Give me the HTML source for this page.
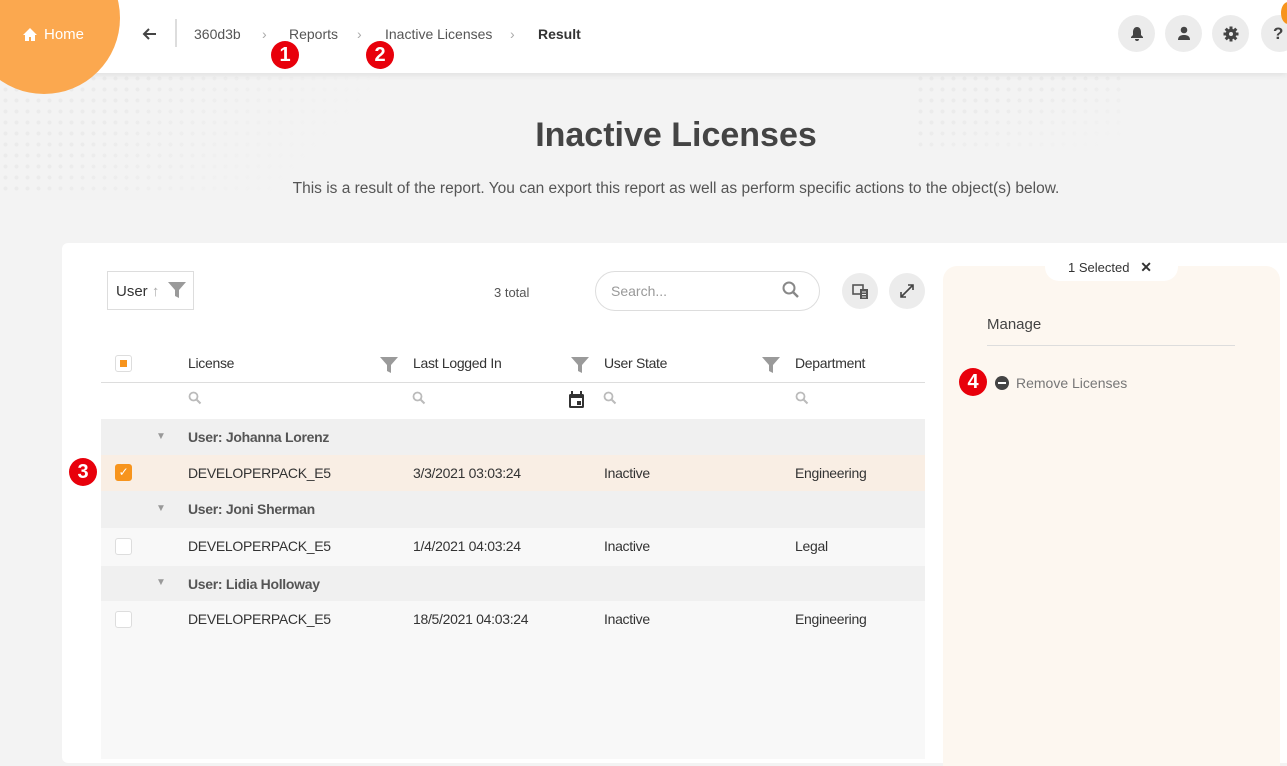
<!DOCTYPE html>
<html><head><meta charset="utf-8"><style>
*{box-sizing:border-box;margin:0;padding:0}
body{width:1287px;height:753px;overflow:hidden;background:#f3f3f3;font-family:"Liberation Sans",sans-serif;color:#333;position:relative}
.dots{position:absolute;background-image:radial-gradient(#e6e6e6 1.8px,transparent 2.2px);background-size:11px 11px}
.hdr{position:absolute;left:0;top:0;width:1287px;height:73px;background:#fff;box-shadow:0 2px 6px rgba(0,0,0,.08);z-index:2}
.home{position:absolute;left:-32px;top:-58px;width:152px;height:152px;border-radius:50%;background:#fba84f;z-index:3}
.hometxt{position:absolute;left:22px;top:26px;color:#fff;font-size:15px;z-index:4;display:flex;align-items:center;gap:6px}
.bc{position:absolute;top:26px;font-size:14px;color:#555;z-index:4}
.sep{position:absolute;top:26px;color:#aaa;font-size:14px;z-index:4}
.badge{position:absolute;width:28px;height:28px;border-radius:50%;background:#e8000b;color:#fff;font-weight:bold;font-size:20px;text-align:center;line-height:28px;z-index:5}
.ib{position:absolute;top:15px;width:37px;height:37px;border-radius:50%;background:#ececec;z-index:4;display:flex;align-items:center;justify-content:center}
.card{position:absolute;left:62px;top:243px;width:1240px;height:520px;background:#fff;border-radius:6px}
.abs{position:absolute}
.row{position:absolute;left:101px;width:824px;font-size:14px;letter-spacing:-0.3px;color:#333}
.row span{position:absolute;top:10px}
.cb{position:absolute;left:14px;width:17px;height:17px;border:1px solid #ddd;border-radius:3px;background:#fff}
</style></head><body>
<div class="dots" style="left:0;top:73px;width:380px;height:120px;opacity:.6;-webkit-mask-image:linear-gradient(135deg,#000 30%,transparent 80%)"></div>
<div class="dots" style="left:915px;top:73px;width:210px;height:80px;opacity:.6;-webkit-mask-image:linear-gradient(160deg,#000 40%,transparent 90%)"></div>
<div class="hdr"></div>
<div class="home"></div>
<div class="hometxt"><svg width="16" height="15" viewBox="0 0 16 15"><path d="M8 1L1 8h2v6h4v-4h2v4h4V8h2z" fill="#fff"/></svg>Home</div>
<svg class="abs" style="left:141px;top:27px;z-index:4" width="16" height="14" viewBox="0 0 16 14"><path d="M15 7H3M8 2L3 7l5 5" stroke="#444" stroke-width="2" fill="none"/></svg>
<div class="abs" style="left:175px;top:19px;width:2px;height:28px;background:#ddd;z-index:4"></div>
<div class="bc" style="left:194px">360d3b</div>
<div class="sep" style="left:262px">›</div>
<div class="bc" style="left:289px">Reports</div>
<div class="sep" style="left:357px">›</div>
<div class="bc" style="left:385px">Inactive Licenses</div>
<div class="sep" style="left:510px">›</div>
<div class="bc" style="left:538px;font-weight:bold;color:#333">Result</div>
<div class="badge" style="left:271px;top:41px">1</div>
<div class="badge" style="left:366px;top:41px">2</div>
<div class="ib" style="left:1118px"><svg width="14" height="15" viewBox="0 0 14 15"><path d="M7 1C4 1 3 4 3 6v3l-2 2v1h12v-1l-2-2V6c0-2-1-5-4-5zM5 13h4a2 2 0 01-4 0z" fill="#444"/></svg></div>
<div class="ib" style="left:1165px"><svg width="14" height="15" viewBox="0 0 14 15"><circle cx="7" cy="4" r="3.3" fill="#444"/><path d="M1 14c0-4 3-5 6-5s6 1 6 5z" fill="#444"/></svg></div>
<div class="ib" style="left:1212px"><svg width="16" height="16" viewBox="0 0 16 16"><g fill="#444"><rect x="6.5" y="0.5" width="3" height="15"/><rect x="0.5" y="6.5" width="15" height="3"/><rect x="6.5" y="0.5" width="3" height="15" transform="rotate(45 8 8)"/><rect x="6.5" y="0.5" width="3" height="15" transform="rotate(-45 8 8)"/><circle cx="8" cy="8" r="5.3"/></g><circle cx="8" cy="8" r="2" fill="#ececec"/></svg></div>
<div class="ib" style="left:1261px;font-weight:bold;font-size:17px;color:#444;justify-content:flex-start;padding-left:12px">?</div>
<div class="abs" style="left:1281px;top:2px;width:14px;height:22px;border-radius:50%;background:#f7941d;z-index:5"></div>

<div class="abs" style="left:0;width:1352px;top:116px;text-align:center;font-size:34px;font-weight:bold;color:#444">Inactive Licenses</div>
<div class="abs" style="left:0;width:1352px;top:180px;text-align:center;font-size:15.5px;color:#555">This is a result of the report. You can export this report as well as perform specific actions to the object(s) below.</div>

<div class="card"></div>
<div class="abs" style="left:107px;top:271px;width:87px;height:39px;border:1px solid #ddd;font-size:15px;padding:11px 0 0 8px">User <span style="color:#aaa">↑</span></div>
<svg class="abs" style="left:168px;top:282px" width="18" height="16" viewBox="0 0 18 16"><path d="M0 0h18l-7 8v8l-4-2V8z" fill="#9a9a9a"/></svg>
<div class="abs" style="left:494px;top:285px;font-size:13px;color:#555">3 total</div>
<div class="abs" style="left:595px;top:271px;width:225px;height:40px;border:1px solid #ddd;border-radius:20px;font-size:14px;color:#999;padding:11px 0 0 15px">Search...</div>
<svg class="abs" style="left:782px;top:281px" width="18" height="18" viewBox="0 0 18 18"><circle cx="7" cy="7" r="5.5" stroke="#888" stroke-width="2" fill="none"/><path d="M11 11l5 5" stroke="#888" stroke-width="2.4"/></svg>
<div class="abs" style="left:842px;top:273px;width:36px;height:36px;border-radius:50%;background:#ececec"></div>
<svg class="abs" style="left:852px;top:284px" width="17" height="15" viewBox="0 0 17 15"><rect x="1" y="1" width="10" height="9" stroke="#555" stroke-width="1.6" fill="none"/><rect x="8" y="5" width="8" height="10" fill="#555"/><path d="M10 8h4M10 10.5h4M10 13h4" stroke="#ececec"/></svg>
<div class="abs" style="left:889px;top:273px;width:36px;height:36px;border-radius:50%;background:#ececec"></div>
<svg class="abs" style="left:899px;top:283px" width="16" height="16" viewBox="0 0 16 16"><path d="M2 14L14 2M9 2h5v5M2 9v5h5" stroke="#444" stroke-width="1.6" fill="none"/></svg>

<div class="abs" style="left:101px;top:419px;width:824px;height:340px;background:#f8f8f8"></div>
<div class="row" style="top:345px;height:38px;border-bottom:1px solid #ddd">
<div class="cb" style="top:10px"><div style="position:absolute;left:4px;top:4px;width:7px;height:7px;background:#f7941d"></div></div>
<span style="left:87px">License</span><span style="left:312px">Last Logged In</span><span style="left:503px">User State</span><span style="left:694px">Department</span>
</div>
<svg class="abs" style="left:380px;top:357px" width="18" height="16" viewBox="0 0 18 16"><path d="M0 0h18l-7 8v8l-4-2V8z" fill="#9a9a9a"/></svg>
<svg class="abs" style="left:571px;top:357px" width="18" height="16" viewBox="0 0 18 16"><path d="M0 0h18l-7 8v8l-4-2V8z" fill="#9a9a9a"/></svg>
<svg class="abs" style="left:762px;top:357px" width="18" height="16" viewBox="0 0 18 16"><path d="M0 0h18l-7 8v8l-4-2V8z" fill="#9a9a9a"/></svg>
<div class="row" style="top:383px;height:36px;background:#fff"></div>
<svg class="abs" style="left:188px;top:391px" width="14" height="14" viewBox="0 0 14 14"><circle cx="5.5" cy="5.5" r="4" stroke="#bbb" stroke-width="1.8" fill="none"/><path d="M8.5 8.5l4 4" stroke="#bbb" stroke-width="2"/></svg>
<svg class="abs" style="left:412px;top:391px" width="14" height="14" viewBox="0 0 14 14"><circle cx="5.5" cy="5.5" r="4" stroke="#bbb" stroke-width="1.8" fill="none"/><path d="M8.5 8.5l4 4" stroke="#bbb" stroke-width="2"/></svg>
<svg class="abs" style="left:603px;top:391px" width="14" height="14" viewBox="0 0 14 14"><circle cx="5.5" cy="5.5" r="4" stroke="#bbb" stroke-width="1.8" fill="none"/><path d="M8.5 8.5l4 4" stroke="#bbb" stroke-width="2"/></svg>
<svg class="abs" style="left:795px;top:391px" width="14" height="14" viewBox="0 0 14 14"><circle cx="5.5" cy="5.5" r="4" stroke="#bbb" stroke-width="1.8" fill="none"/><path d="M8.5 8.5l4 4" stroke="#bbb" stroke-width="2"/></svg>
<svg class="abs" style="left:568px;top:391px" width="17" height="18" viewBox="0 0 17 18"><rect x="1" y="3" width="15" height="14" rx="1.5" fill="#333"/><rect x="3" y="7" width="11" height="8" fill="#fff"/><rect x="9" y="10" width="4" height="4" fill="#333"/><path d="M4 0v4M13 0v4" stroke="#333" stroke-width="2"/></svg>

<div class="row" style="top:419px;height:36px;background:#f0f0f0;font-weight:bold;color:#555"><span style="left:55px;font-size:10px;top:12px;color:#999">▼</span><span style="left:87px">User: Johanna Lorenz</span></div>
<div class="row" style="top:455px;height:36px;background:#f9eee4"><div class="cb" style="top:9px;background:#f7941d;border-color:#f7941d;color:#fff;font-size:12px;text-align:center;line-height:15px">✓</div><span style="left:87px">DEVELOPERPACK_E5</span><span style="left:312px">3/3/2021 03:03:24</span><span style="left:503px">Inactive</span><span style="left:694px">Engineering</span></div>
<div class="row" style="top:491px;height:37px;background:#f0f0f0;font-weight:bold;color:#555"><span style="left:55px;font-size:10px;top:12px;color:#999">▼</span><span style="left:87px">User: Joni Sherman</span></div>
<div class="row" style="top:528px;height:38px;background:#f8f8f8"><div class="cb" style="top:10px"></div><span style="left:87px">DEVELOPERPACK_E5</span><span style="left:312px">1/4/2021 04:03:24</span><span style="left:503px">Inactive</span><span style="left:694px">Legal</span></div>
<div class="row" style="top:566px;height:35px;background:#f0f0f0;font-weight:bold;color:#555"><span style="left:55px;font-size:10px;top:11px;color:#999">▼</span><span style="left:87px">User: Lidia Holloway</span></div>
<div class="row" style="top:601px;height:37px;background:#f8f8f8"><div class="cb" style="top:10px"></div><span style="left:87px">DEVELOPERPACK_E5</span><span style="left:312px">18/5/2021 04:03:24</span><span style="left:503px">Inactive</span><span style="left:694px">Engineering</span></div>
<div class="badge" style="left:69px;top:458px">3</div>

<div class="abs" style="left:943px;top:266px;width:337px;height:500px;background:#fdf7f0;border-radius:14px 14px 0 0"></div>
<div class="abs" style="left:1045px;top:250px;width:133px;height:31px;background:#fff;border-radius:0 0 14px 14px;font-size:13px;color:#333;padding:9px 0 0 23px">1 Selected &nbsp; <b style="font-size:14px">✕</b></div>
<div class="abs" style="left:987px;top:316px;font-size:15px;color:#444">Manage</div>
<div class="abs" style="left:987px;top:345px;width:248px;height:1px;background:#ddd"></div>
<div class="abs" style="left:995px;top:376px;width:14px;height:14px;border-radius:50%;background:#444"><div style="position:absolute;left:3px;top:6px;width:8px;height:2px;background:#fff"></div></div>
<div class="abs" style="left:1016px;top:375px;font-size:14px;color:#777">Remove Licenses</div>
<div class="badge" style="left:959px;top:368px">4</div>
</body></html>
